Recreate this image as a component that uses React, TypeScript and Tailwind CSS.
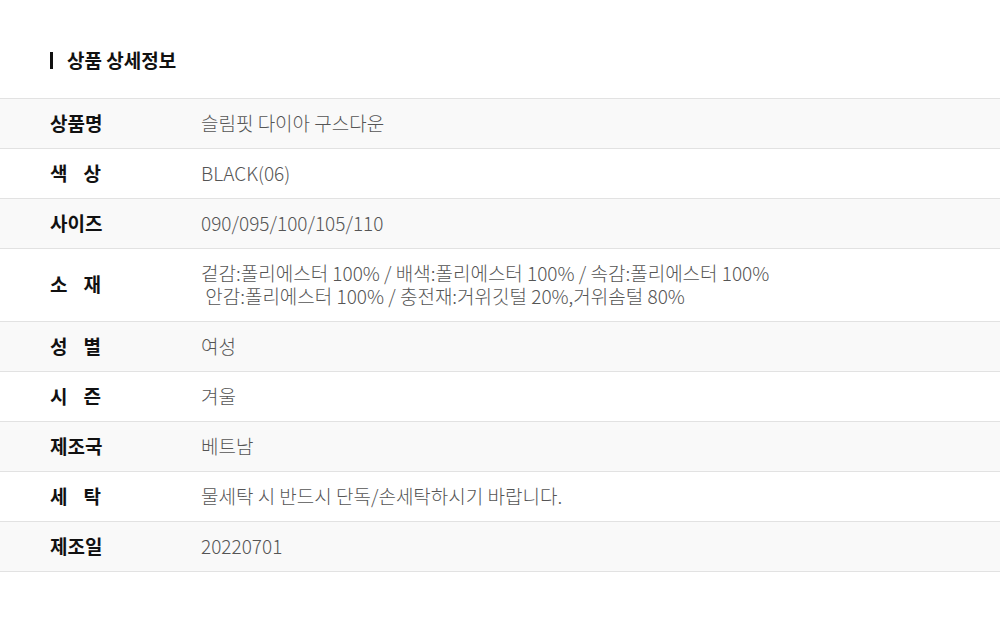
import React from 'react';

const rows: { label: string; value: React.ReactNode; spread?: boolean }[] = [
  { label: '상품명', value: '슬림핏 다이아 구스다운' },
  { label: '색상', value: 'BLACK(06)', spread: true },
  { label: '사이즈', value: '090/095/100/105/110' },
  {
    label: '소재',
    spread: true,
    value: (
      <>
        겉감:폴리에스터 100% / 배색:폴리에스터 100% / 속감:폴리에스터 100%
        <br />
        &nbsp;안감:폴리에스터 100% / 충전재:거위깃털 20%,거위솜털 80%
      </>
    ),
  },
  { label: '성별', value: '여성', spread: true },
  { label: '시즌', value: '겨울', spread: true },
  { label: '제조국', value: '베트남' },
  { label: '세탁', value: '물세탁 시 반드시 단독/손세탁하시기 바랍니다.', spread: true },
  { label: '제조일', value: '20220701' },
];

const App: React.FC = () => {
  return (
    <div
      className="w-[1000px] min-h-[621px] bg-white pt-[48px]"
      style={{ fontFamily: '"Noto Sans CJK KR", "Noto Sans", sans-serif' }}
    >
      <div className="flex items-center px-[50px] h-[24px]">
        <span className="w-[3px] h-[17px] bg-[#111]" />
        <h2 className="ml-[14px] text-[19px] font-bold text-[#111] leading-none mt-[-1px]">상품 상세정보</h2>
      </div>
      <div className="mt-[26px] border-t border-[#e2e2e2]">
        {rows.map((row, i) => (
          <div
            key={i}
            className={`flex items-center border-b border-[#e2e2e2] ${i % 2 === 0 ? 'bg-[#f9f9f9]' : 'bg-white'} ${
              row.label === '소재' ? 'h-[73px]' : 'h-[50px]'
            }`}
          >
            <div className="w-[201px] pl-[50px] shrink-0 mt-[-3px]">
              {row.spread ? (
                <div className="w-[51px] flex justify-between text-[19px] font-bold text-[#111] leading-[23px]">
                  {row.label.split('').map((c, j) => (
                    <span key={j}>{c}</span>
                  ))}
                </div>
              ) : (
                <div className="text-[19px] font-bold text-[#111] leading-[23px]">{row.label}</div>
              )}
            </div>
            <div className="text-[19px] font-light text-[#555] leading-[23px] mt-[-3px]">{row.value}</div>
          </div>
        ))}
      </div>
    </div>
  );
};

export default App;
